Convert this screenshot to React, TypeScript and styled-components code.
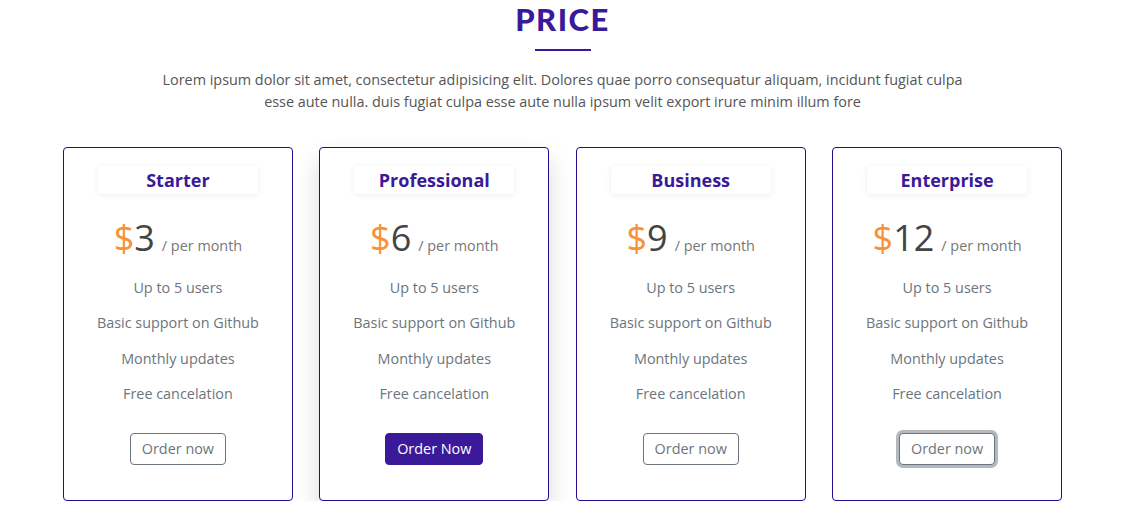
import React from "react";
import styled, { createGlobalStyle, css } from "styled-components";

const Global = createGlobalStyle`
  html, body { margin: 0; padding: 0; background: #fff; }
  body { font-family: "Open Sans", "Liberation Sans", sans-serif; }
  * { box-sizing: border-box; }
`;

const Section = styled.section`
  width: 1125px;
  display: flex;
  flex-direction: column;
  align-items: center;
`;

const Title = styled.h2`
  margin: 0;
  font-family: "Lato", "Open Sans", sans-serif;
  font-weight: 900;
  font-size: 31px;
  line-height: 38px;
  letter-spacing: 1.5px;
  color: #3a1a98;
`;

const Rule = styled.div`
  width: 56px;
  height: 2px;
  background: #3a1a98;
  margin-top: 11px;
`;

const Lead = styled.p`
  margin: 18px 0 0;
  width: 820px;
  text-align: center;
  font-size: 14.4px;
  line-height: 22px;
  color: #555;
`;

const Grid = styled.div`
  display: flex;
  gap: 26.4px;
  margin-top: 34px;
`;

const Card = styled.div<{ $featured?: boolean }>`
  width: 230px;
  height: 354px;
  border: 1px solid #2a0b8c;
  border-radius: 4px;
  background: #fff;
  display: flex;
  flex-direction: column;
  align-items: center;
  padding-top: 18px;
  ${(p) =>
    p.$featured &&
    css`
      box-shadow: 0 12px 24px rgba(0, 0, 0, 0.15);
    `}
`;

const PlanName = styled.div`
  width: 160px;
  height: 28px;
  display: flex;
  align-items: center;
  justify-content: center;
  background: #fff;
  box-shadow: 0 1px 6px rgba(0, 0, 0, 0.07);
  font-weight: 700;
  font-size: 18px;
  color: #3a1a98;
`;

const PriceRow = styled.div`
  display: flex;
  align-items: baseline;
  margin-top: 19px;
  height: 46px;
`;

const Dollar = styled.span`
  font-size: 36px;
  color: #f7923a;
`;

const Amount = styled.span`
  font-size: 36px;
  color: #444;
  margin-right: 7px;
`;

const Per = styled.span`
  font-size: 14.4px;
  color: #777;
`;

const Features = styled.ul`
  list-style: none;
  margin: 18px 0 0;
  padding: 0;
  display: flex;
  flex-direction: column;
  gap: 14.3px;
  align-items: center;
`;

const Feature = styled.li`
  font-size: 14.4px;
  line-height: 21px;
  color: #6c757d;
`;

const Button = styled.button<{ $variant: "outline" | "solid" | "focus" }>`
  margin-top: 29px;
  height: 32px;
  padding: 0 11px;
  border-radius: 4px;
  font-family: "Open Sans", sans-serif;
  font-size: 14.4px;
  cursor: pointer;
  ${(p) =>
    p.$variant === "solid"
      ? css`
          background: #3b1a99;
          border: 1px solid #3b1a99;
          color: #fff;
        `
      : css`
          background: #fff;
          border: 1px solid #6c757d;
          color: #6c757d;
        `}
  ${(p) =>
    p.$variant === "focus" &&
    css`
      box-shadow: 0 0 0 3px rgba(130, 138, 145, 0.6);
    `}
`;

const plans = [
  { name: "Starter", price: "3", btn: "Order now", variant: "outline" as const },
  { name: "Professional", price: "6", btn: "Order Now", variant: "solid" as const, featured: true },
  { name: "Business", price: "9", btn: "Order now", variant: "outline" as const },
  { name: "Enterprise", price: "12", btn: "Order now", variant: "focus" as const },
];

const features = ["Up to 5 users", "Basic support on Github", "Monthly updates", "Free cancelation"];

export default function App() {
  return (
    <>
      <Global />
      <Section>
        <Title>PRICE</Title>
        <Rule />
        <Lead>
          Lorem ipsum dolor sit amet, consectetur adipisicing elit. Dolores quae porro consequatur aliquam, incidunt
          fugiat culpa esse aute nulla. duis fugiat culpa esse aute nulla ipsum velit export irure minim illum fore
        </Lead>
        <Grid>
          {plans.map((p) => (
            <Card key={p.name} $featured={p.featured}>
              <PlanName>{p.name}</PlanName>
              <PriceRow>
                <Dollar>$</Dollar>
                <Amount>{p.price}</Amount>
                <Per>/ per month</Per>
              </PriceRow>
              <Features>
                {features.map((f) => (
                  <Feature key={f}>{f}</Feature>
                ))}
              </Features>
              <Button $variant={p.variant}>{p.btn}</Button>
            </Card>
          ))}
        </Grid>
      </Section>
    </>
  );
}
